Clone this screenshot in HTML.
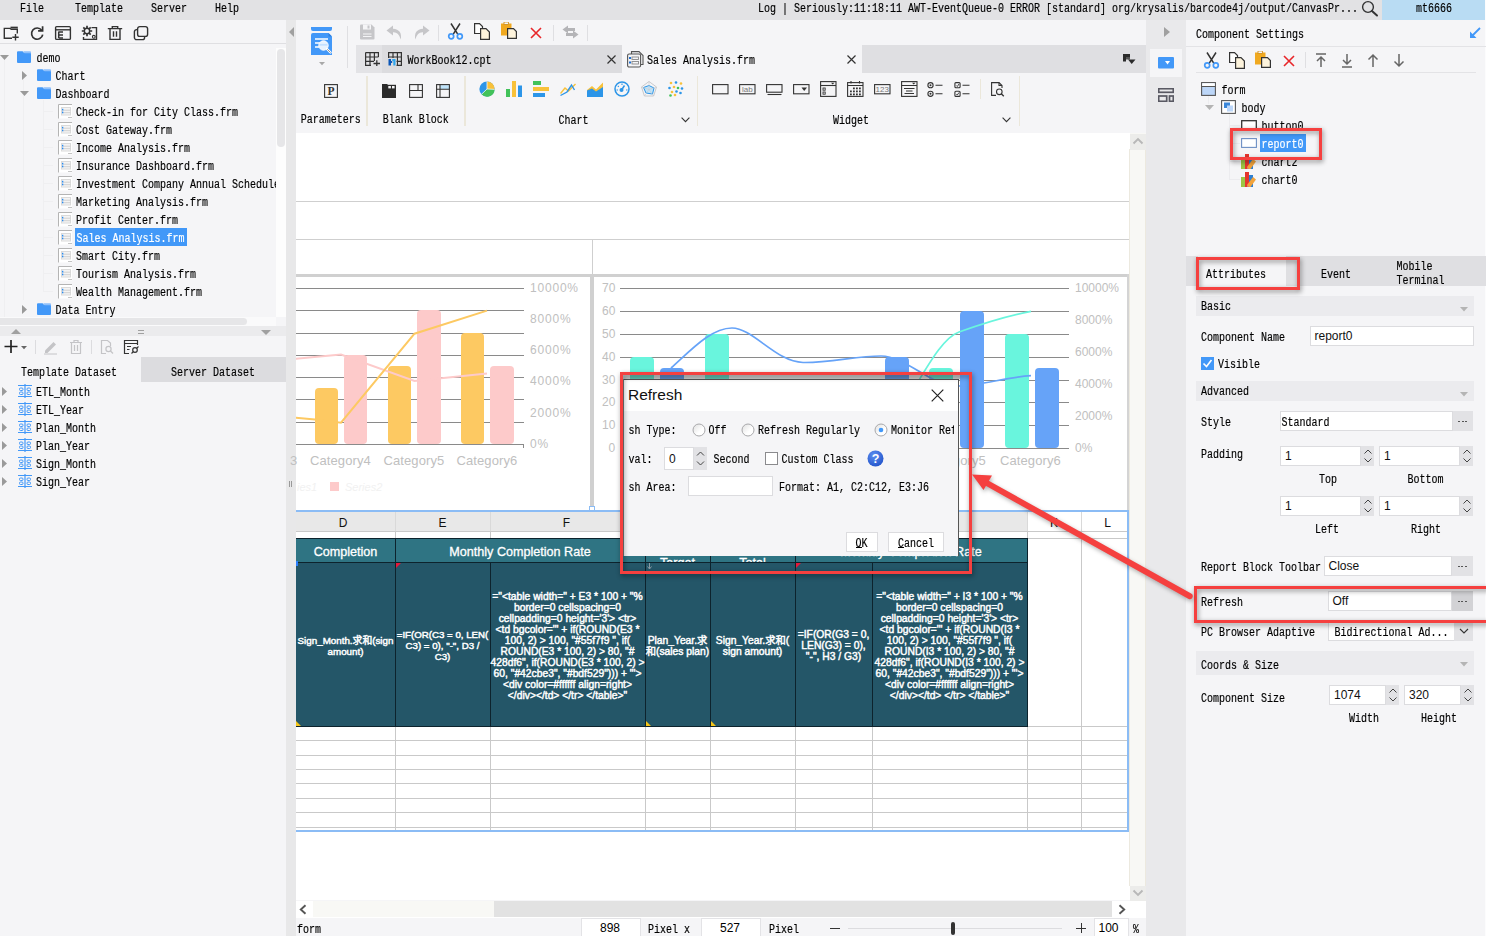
<!DOCTYPE html>
<html lang="en"><head><meta charset="utf-8"><title>Designer</title><style>
html,body{margin:0;padding:0}
body{width:1486px;height:936px;overflow:hidden;background:#f5f5f7;position:relative;font-family:"Liberation Sans",sans-serif}
#app{position:absolute;left:0;top:0;width:1486px;height:936px;overflow:hidden}
#app div,#app span,#app svg{position:absolute}
.t{font:10px/10px "Liberation Mono","Noto Sans CJK SC",monospace;transform:scaleY(1.2);transform-origin:0 0;white-space:pre;-webkit-text-stroke:0.15px currentColor}
.s{font-family:"Liberation Sans","Noto Sans CJK SC",sans-serif;white-space:pre}
.c{font-family:"Liberation Sans","Noto Sans CJK SC",sans-serif;color:#fff;-webkit-text-stroke:0.3px #fff;text-align:center;white-space:pre}
</style></head><body><div id="app">
<div style="left:0px;top:0px;width:1486px;height:20px;background:#e2e2e4;"></div>
<span class="t" style="left:20px;top:3.6px;">File</span>
<span class="t" style="left:75px;top:3.6px;">Template</span>
<span class="t" style="left:151px;top:3.6px;">Server</span>
<span class="t" style="left:215px;top:3.6px;">Help</span>
<span class="t" style="left:758px;top:3.6px;">Log | Seriously:11:18:11 AWT-EventQueue-0 ERROR [standard] org/krysalis/barcode4j/output/CanvasPr...</span>
<svg style="left:1360px;top:0px;" width="20" height="18" viewBox="0 0 20 18"><circle cx="8" cy="7" r="5.400" fill="none" stroke="#333" stroke-width="1.400"/><path d="M12 11l5 4.500" stroke="#333" stroke-width="2" stroke-linecap="round"/></svg>
<div style="left:1382px;top:0px;width:104px;height:20px;background:#b9dcf3;"></div>
<span class="t" style="left:1416px;top:3.6px;">mt6666</span>
<div style="left:0px;top:20px;width:286px;height:916px;background:#f5f5f7;"></div>
<div style="left:286px;top:20px;width:10px;height:916px;background:#e8e8e9;"></div>
<div style="left:0px;top:43px;width:286px;height:1px;background:#dfdfe2;"></div>
<svg style="left:3px;top:25px;" width="18" height="16" viewBox="0 0 18 16"><path d="M14.300 8.500V4.300H8.300L7 3.400H1.300V13.200H9" fill="none" stroke="#333" stroke-width="1.400"/><path d="M7.500 2.500H14.800" stroke="#333" stroke-width="1.700" fill="none"/><path d="M9.300 12.200h6.400M12.500 9v6.400" fill="none" stroke="#333" stroke-width="1.400"/></svg>
<svg style="left:29px;top:25px;" width="16" height="16" viewBox="0 0 16 16"><path d="M12.700 5.300A5.600 5.600 0 1 0 13.700 9.600" fill="none" stroke="#333" stroke-width="1.700"/><path d="M13.600 1.300V5.800H9.100" fill="none" stroke="#333" stroke-width="1.700"/></svg>
<svg style="left:54px;top:25px;" width="18" height="16" viewBox="0 0 18 16"><rect x="1.600" y="1.600" width="14.800" height="12.800" rx="1" fill="none" stroke="#333" stroke-width="1.400"/><path d="M1.600 4.800h14.800" fill="none" stroke="#333" stroke-width="1.400"/><path d="M4.700 6.500v6.600M4.700 7h4.300M4.700 10h4.300M4.700 13h4.300" stroke="#333" stroke-width="1.500" fill="none"/></svg>
<svg style="left:81px;top:25px;" width="18" height="16" viewBox="0 0 18 16"><circle cx="6" cy="6" r="2.700" fill="none" stroke="#333" stroke-width="1.500"/><path d="M9.10 6.00L11.20 6.00M8.19 8.19L9.68 9.68M6.00 9.10L6.00 11.20M3.81 8.19L2.32 9.68M2.90 6.00L0.80 6.00M3.81 3.81L2.32 2.32M6.00 2.90L6.00 0.80M8.19 3.81L9.68 2.32" stroke="#333" stroke-width="1.700" fill="none"/><path d="M10.500 2.600h5v11.800h-13v-2.400" fill="none" stroke="#333" stroke-width="1.400"/><circle cx="12.800" cy="11.800" r="1.400" fill="none" stroke="#333" stroke-width="1.100"/></svg>
<svg style="left:107px;top:25px;" width="16" height="16" viewBox="0 0 16 16"><path d="M0.800 3.600h14.400M5.300 3.600V1.600h5.400v2M3 3.600v10.800h10v-10.800M6.500 6.300v5.400M9.500 6.300v5.400" fill="none" stroke="#333" stroke-width="1.400"/></svg>
<svg style="left:133px;top:25px;" width="16" height="16" viewBox="0 0 16 16"><rect x="4.600" y="1.600" width="10" height="9.800" rx="2.200" fill="none" stroke="#333" stroke-width="1.400"/><path d="M4.600 4.600H3.600a2.200 2.200 0 0 0 -2.200 2.200v5.600a2.200 2.200 0 0 0 2.200 2.200h5.800a2.200 2.200 0 0 0 2.200 -2.200v-1" fill="none" stroke="#333" stroke-width="1.400"/></svg>
<div style="left:4px;top:60px;width:1px;height:260px;background:#efeff1;"></div>
<div style="left:23px;top:78px;width:1px;height:222px;background:#efeff1;"></div>
<div style="left:43px;top:100px;width:1px;height:192px;background:#efeff1;"></div>
<svg style="left:0px;top:55px;" width="9" height="5" viewBox="0 0 9 5"><path d="M0 0H9L4.5 5Z" fill="#9a9a9a"/></svg>
<svg style="left:17px;top:51px;" width="14" height="12" viewBox="0 0 14 12"><path d="M0 1.2Q0 0.2 1 0.2H5.6L7 1.8H13Q14 1.8 14 2.8V11Q14 12 13 12H1Q0 12 0 11Z" fill="#4298f8"/><path d="M6.2 0.2H13Q14 0.2 14 1.2V2.2H7.6Z" fill="#8fc0fb"/></svg>
<span class="t" style="left:36.5px;top:53.6px;">demo</span>
<svg style="left:22px;top:71px;" width="5" height="9" viewBox="0 0 5 9"><path d="M0 0V9L5 4.5Z" fill="#9a9a9a"/></svg>
<svg style="left:37px;top:69px;" width="14" height="12" viewBox="0 0 14 12"><path d="M0 1.2Q0 0.2 1 0.2H5.6L7 1.8H13Q14 1.8 14 2.8V11Q14 12 13 12H1Q0 12 0 11Z" fill="#4298f8"/><path d="M6.2 0.2H13Q14 0.2 14 1.2V2.2H7.6Z" fill="#8fc0fb"/></svg>
<span class="t" style="left:55.5px;top:71.6px;">Chart</span>
<svg style="left:20px;top:91px;" width="9" height="5" viewBox="0 0 9 5"><path d="M0 0H9L4.5 5Z" fill="#9a9a9a"/></svg>
<svg style="left:37px;top:87px;" width="14" height="12" viewBox="0 0 14 12"><path d="M0 1.2Q0 0.2 1 0.2H5.6L7 1.8H13Q14 1.8 14 2.8V11Q14 12 13 12H1Q0 12 0 11Z" fill="#4298f8"/><path d="M6.2 0.2H13Q14 0.2 14 1.2V2.2H7.6Z" fill="#8fc0fb"/></svg>
<span class="t" style="left:55.5px;top:89.6px;">Dashboard</span>
<div style="left:44px;top:111px;width:9px;height:1px;background:#efeff1;"></div>
<svg style="left:58px;top:104px;" width="14" height="15" viewBox="0 0 14 15"><rect x="0" y="0" width="14" height="14.500" fill="#fff"/><path d="M0.500 14.500V0.500H14" fill="none" stroke="#b4b4b4"/><rect x="3.500" y="3.500" width="9" height="7.500" fill="#f4f4f4" stroke="#dadada"/><path d="M5 6.200H12.500M5 8.700H12.500" stroke="#d0d0d0"/><rect x="4" y="4.800" width="1.300" height="1.700" fill="#2a8cf0"/><rect x="4" y="7.600" width="1.300" height="1.700" fill="#2a8cf0"/><rect x="10" y="13" width="4" height="1" fill="#c4c4c4"/></svg>
<span class="t" style="left:76px;top:107.6px;">Check-in for City Class.frm</span>
<div style="left:44px;top:129px;width:9px;height:1px;background:#efeff1;"></div>
<svg style="left:58px;top:122px;" width="14" height="15" viewBox="0 0 14 15"><rect x="0" y="0" width="14" height="14.500" fill="#fff"/><path d="M0.500 14.500V0.500H14" fill="none" stroke="#b4b4b4"/><rect x="3.500" y="3.500" width="9" height="7.500" fill="#f4f4f4" stroke="#dadada"/><path d="M5 6.200H12.500M5 8.700H12.500" stroke="#d0d0d0"/><rect x="4" y="4.800" width="1.300" height="1.700" fill="#2a8cf0"/><rect x="4" y="7.600" width="1.300" height="1.700" fill="#2a8cf0"/><rect x="10" y="13" width="4" height="1" fill="#c4c4c4"/></svg>
<span class="t" style="left:76px;top:125.6px;">Cost Gateway.frm</span>
<div style="left:44px;top:147px;width:9px;height:1px;background:#efeff1;"></div>
<svg style="left:58px;top:140px;" width="14" height="15" viewBox="0 0 14 15"><rect x="0" y="0" width="14" height="14.500" fill="#fff"/><path d="M0.500 14.500V0.500H14" fill="none" stroke="#b4b4b4"/><rect x="3.500" y="3.500" width="9" height="7.500" fill="#f4f4f4" stroke="#dadada"/><path d="M5 6.200H12.500M5 8.700H12.500" stroke="#d0d0d0"/><rect x="4" y="4.800" width="1.300" height="1.700" fill="#2a8cf0"/><rect x="4" y="7.600" width="1.300" height="1.700" fill="#2a8cf0"/><rect x="10" y="13" width="4" height="1" fill="#c4c4c4"/></svg>
<span class="t" style="left:76px;top:143.6px;">Income Analysis.frm</span>
<div style="left:44px;top:165px;width:9px;height:1px;background:#efeff1;"></div>
<svg style="left:58px;top:158px;" width="14" height="15" viewBox="0 0 14 15"><rect x="0" y="0" width="14" height="14.500" fill="#fff"/><path d="M0.500 14.500V0.500H14" fill="none" stroke="#b4b4b4"/><rect x="3.500" y="3.500" width="9" height="7.500" fill="#f4f4f4" stroke="#dadada"/><path d="M5 6.200H12.500M5 8.700H12.500" stroke="#d0d0d0"/><rect x="4" y="4.800" width="1.300" height="1.700" fill="#2a8cf0"/><rect x="4" y="7.600" width="1.300" height="1.700" fill="#2a8cf0"/><rect x="10" y="13" width="4" height="1" fill="#c4c4c4"/></svg>
<span class="t" style="left:76px;top:161.6px;">Insurance Dashboard.frm</span>
<div style="left:44px;top:183px;width:9px;height:1px;background:#efeff1;"></div>
<svg style="left:58px;top:176px;" width="14" height="15" viewBox="0 0 14 15"><rect x="0" y="0" width="14" height="14.500" fill="#fff"/><path d="M0.500 14.500V0.500H14" fill="none" stroke="#b4b4b4"/><rect x="3.500" y="3.500" width="9" height="7.500" fill="#f4f4f4" stroke="#dadada"/><path d="M5 6.200H12.500M5 8.700H12.500" stroke="#d0d0d0"/><rect x="4" y="4.800" width="1.300" height="1.700" fill="#2a8cf0"/><rect x="4" y="7.600" width="1.300" height="1.700" fill="#2a8cf0"/><rect x="10" y="13" width="4" height="1" fill="#c4c4c4"/></svg>
<div style="left:76px;top:174px;width:200px;height:18px;overflow:hidden"><span class="t" style="left:0;top:5.600px">Investment Company Annual Schedule.frm</span></div>
<div style="left:44px;top:201px;width:9px;height:1px;background:#efeff1;"></div>
<svg style="left:58px;top:194px;" width="14" height="15" viewBox="0 0 14 15"><rect x="0" y="0" width="14" height="14.500" fill="#fff"/><path d="M0.500 14.500V0.500H14" fill="none" stroke="#b4b4b4"/><rect x="3.500" y="3.500" width="9" height="7.500" fill="#f4f4f4" stroke="#dadada"/><path d="M5 6.200H12.500M5 8.700H12.500" stroke="#d0d0d0"/><rect x="4" y="4.800" width="1.300" height="1.700" fill="#2a8cf0"/><rect x="4" y="7.600" width="1.300" height="1.700" fill="#2a8cf0"/><rect x="10" y="13" width="4" height="1" fill="#c4c4c4"/></svg>
<span class="t" style="left:76px;top:197.6px;">Marketing Analysis.frm</span>
<div style="left:44px;top:219px;width:9px;height:1px;background:#efeff1;"></div>
<svg style="left:58px;top:212px;" width="14" height="15" viewBox="0 0 14 15"><rect x="0" y="0" width="14" height="14.500" fill="#fff"/><path d="M0.500 14.500V0.500H14" fill="none" stroke="#b4b4b4"/><rect x="3.500" y="3.500" width="9" height="7.500" fill="#f4f4f4" stroke="#dadada"/><path d="M5 6.200H12.500M5 8.700H12.500" stroke="#d0d0d0"/><rect x="4" y="4.800" width="1.300" height="1.700" fill="#2a8cf0"/><rect x="4" y="7.600" width="1.300" height="1.700" fill="#2a8cf0"/><rect x="10" y="13" width="4" height="1" fill="#c4c4c4"/></svg>
<span class="t" style="left:76px;top:215.6px;">Profit Center.frm</span>
<div style="left:44px;top:237px;width:9px;height:1px;background:#efeff1;"></div>
<svg style="left:58px;top:230px;" width="14" height="15" viewBox="0 0 14 15"><rect x="0" y="0" width="14" height="14.500" fill="#fff"/><path d="M0.500 14.500V0.500H14" fill="none" stroke="#b4b4b4"/><rect x="3.500" y="3.500" width="9" height="7.500" fill="#f4f4f4" stroke="#dadada"/><path d="M5 6.200H12.500M5 8.700H12.500" stroke="#d0d0d0"/><rect x="4" y="4.800" width="1.300" height="1.700" fill="#2a8cf0"/><rect x="4" y="7.600" width="1.300" height="1.700" fill="#2a8cf0"/><rect x="10" y="13" width="4" height="1" fill="#c4c4c4"/></svg>
<div style="left:75px;top:228px;width:112px;height:18px;background:#4198f8;"></div>
<span class="t" style="left:76.5px;top:233.6px;color:#fff;">Sales Analysis.frm</span>
<div style="left:44px;top:255px;width:9px;height:1px;background:#efeff1;"></div>
<svg style="left:58px;top:248px;" width="14" height="15" viewBox="0 0 14 15"><rect x="0" y="0" width="14" height="14.500" fill="#fff"/><path d="M0.500 14.500V0.500H14" fill="none" stroke="#b4b4b4"/><rect x="3.500" y="3.500" width="9" height="7.500" fill="#f4f4f4" stroke="#dadada"/><path d="M5 6.200H12.500M5 8.700H12.500" stroke="#d0d0d0"/><rect x="4" y="4.800" width="1.300" height="1.700" fill="#2a8cf0"/><rect x="4" y="7.600" width="1.300" height="1.700" fill="#2a8cf0"/><rect x="10" y="13" width="4" height="1" fill="#c4c4c4"/></svg>
<span class="t" style="left:76px;top:251.6px;">Smart City.frm</span>
<div style="left:44px;top:273px;width:9px;height:1px;background:#efeff1;"></div>
<svg style="left:58px;top:266px;" width="14" height="15" viewBox="0 0 14 15"><rect x="0" y="0" width="14" height="14.500" fill="#fff"/><path d="M0.500 14.500V0.500H14" fill="none" stroke="#b4b4b4"/><rect x="3.500" y="3.500" width="9" height="7.500" fill="#f4f4f4" stroke="#dadada"/><path d="M5 6.200H12.500M5 8.700H12.500" stroke="#d0d0d0"/><rect x="4" y="4.800" width="1.300" height="1.700" fill="#2a8cf0"/><rect x="4" y="7.600" width="1.300" height="1.700" fill="#2a8cf0"/><rect x="10" y="13" width="4" height="1" fill="#c4c4c4"/></svg>
<span class="t" style="left:76px;top:269.6px;">Tourism Analysis.frm</span>
<div style="left:44px;top:291px;width:9px;height:1px;background:#efeff1;"></div>
<svg style="left:58px;top:284px;" width="14" height="15" viewBox="0 0 14 15"><rect x="0" y="0" width="14" height="14.500" fill="#fff"/><path d="M0.500 14.500V0.500H14" fill="none" stroke="#b4b4b4"/><rect x="3.500" y="3.500" width="9" height="7.500" fill="#f4f4f4" stroke="#dadada"/><path d="M5 6.200H12.500M5 8.700H12.500" stroke="#d0d0d0"/><rect x="4" y="4.800" width="1.300" height="1.700" fill="#2a8cf0"/><rect x="4" y="7.600" width="1.300" height="1.700" fill="#2a8cf0"/><rect x="10" y="13" width="4" height="1" fill="#c4c4c4"/></svg>
<span class="t" style="left:76px;top:287.6px;">Wealth Management.frm</span>
<svg style="left:22px;top:305px;" width="5" height="9" viewBox="0 0 5 9"><path d="M0 0V9L5 4.5Z" fill="#9a9a9a"/></svg>
<svg style="left:37px;top:303px;" width="14" height="12" viewBox="0 0 14 12"><path d="M0 1.2Q0 0.2 1 0.2H5.6L7 1.8H13Q14 1.8 14 2.8V11Q14 12 13 12H1Q0 12 0 11Z" fill="#4298f8"/><path d="M6.2 0.2H13Q14 0.2 14 1.2V2.2H7.6Z" fill="#8fc0fb"/></svg>
<span class="t" style="left:55.5px;top:305.6px;">Data Entry</span>
<div style="left:276px;top:44px;width:10px;height:282px;background:#f5f5f7;"></div>
<div style="left:276px;top:48px;width:10px;height:269px;background:#fdfdfd;"></div>
<div style="left:277px;top:48.5px;width:8px;height:98px;background:#e6e6e8;border-radius:4px"></div>
<div style="left:0px;top:317px;width:276px;height:9px;background:#fafafb;"></div>
<div style="left:0px;top:317.5px;width:247px;height:7.5px;background:#e6e6e8;border-radius:0 4px 4px 0"></div>
<div style="left:0px;top:326px;width:286px;height:10px;background:#ebebed;"></div>
<svg style="left:11px;top:329px;" width="10" height="5" viewBox="0 0 10 5"><path d="M0 5H10L5 0Z" fill="#a0a0a0"/></svg>
<svg style="left:261px;top:329.5px;" width="10" height="5" viewBox="0 0 10 5"><path d="M0 0H10L5 5Z" fill="#a0a0a0"/></svg>
<div style="left:138px;top:330px;width:6px;height:1px;background:#a0a0a0;"></div>
<div style="left:138px;top:333px;width:6px;height:1px;background:#a0a0a0;"></div>
<div style="left:0px;top:336px;width:286px;height:22px;background:#f5f5f7;"></div>
<svg style="left:3px;top:339px;" width="24" height="16" viewBox="0 0 24 16"><path d="M1.5 7.5h13M8 1v13" stroke="#222" stroke-width="1.7" fill="none"/><path d="M18 7h6l-3 3.2z" fill="#666"/></svg>
<div style="left:35px;top:340px;width:1px;height:14px;background:#dcdcdf;"></div>
<div style="left:91px;top:340px;width:1px;height:14px;background:#dcdcdf;"></div>
<svg style="left:43px;top:339px;" width="16" height="16" viewBox="0 0 16 16"><path d="M2 11.5L10.5 3l2.5 2.5L4.5 14H2Z" fill="#c4c4c7"/><path d="M1 15h13" stroke="#c4c4c7"/></svg>
<svg style="left:68px;top:339px;" width="16" height="16" viewBox="0 0 16 16"><path d="M2 3.5h12M6 3.5V1.5h4v2M3.5 3.5v11h9v-11M6.5 6v6M9.5 6v6" fill="none" stroke="#c4c4c7" stroke-width="1.2"/></svg>
<svg style="left:99px;top:339px;" width="16" height="16" viewBox="0 0 16 16"><path d="M11.5 7V4L8.5 1.5H2.5V14.500H7" fill="none" stroke="#c4c4c7" stroke-width="1.2"/><circle cx="9.500" cy="10" r="2.6" fill="none" stroke="#c4c4c7" stroke-width="1.2"/><path d="M11.500 12L14 14.500" stroke="#c4c4c7" stroke-width="1.3"/></svg>
<svg style="left:123px;top:339px;" width="18" height="16" viewBox="0 0 18 16"><path d="M14.500 6V1.500H1.500V14.500H6" fill="none" stroke="#333" stroke-width="1.2"/><path d="M1.500 4.500H14.500M4 7.500H8M4 10.500H6.500" fill="none" stroke="#333" stroke-width="1.2"/><circle cx="12" cy="11" r="2.300" fill="none" stroke="#333" stroke-width="1.2"/><path d="M8.500 14.500L10.300 12.700M13.600 9.400L15.500 7.500" fill="none" stroke="#333" stroke-width="1.2"/></svg>
<div style="left:0px;top:357px;width:141px;height:25px;background:#f5f5f7;"></div>
<div style="left:141px;top:357px;width:145px;height:25px;background:#dcdcdf;"></div>
<span class="t" style="left:21px;top:367.6px;">Template Dataset</span>
<span class="t" style="left:171px;top:367.6px;">Server Dataset</span>
<svg style="left:2px;top:386.5px;" width="5" height="9" viewBox="0 0 5 9"><path d="M0 0V9L5 4.5Z" fill="#9a9a9a"/></svg>
<svg style="left:18px;top:384px;" width="14" height="14" viewBox="0 0 14 14"><path d="M7 0V14" stroke="#4298f8" stroke-width="1.2"/><path d="M0 1.500H14M0 12.500H14" stroke="#4298f8" stroke-width="1"/><g fill="none" stroke="#4298f8" stroke-width="1"><rect x="1.500" y="4" width="3.500" height="2.500" rx="1"/><rect x="1.500" y="8" width="3.500" height="2.500" rx="1"/><rect x="9" y="4" width="3.500" height="2.500" rx="1"/><rect x="9" y="8" width="3.500" height="2.500" rx="1"/></g></svg>
<span class="t" style="left:36px;top:387.6px;">ETL_Month</span>
<svg style="left:2px;top:404.5px;" width="5" height="9" viewBox="0 0 5 9"><path d="M0 0V9L5 4.5Z" fill="#9a9a9a"/></svg>
<svg style="left:18px;top:402px;" width="14" height="14" viewBox="0 0 14 14"><path d="M7 0V14" stroke="#4298f8" stroke-width="1.2"/><path d="M0 1.500H14M0 12.500H14" stroke="#4298f8" stroke-width="1"/><g fill="none" stroke="#4298f8" stroke-width="1"><rect x="1.500" y="4" width="3.500" height="2.500" rx="1"/><rect x="1.500" y="8" width="3.500" height="2.500" rx="1"/><rect x="9" y="4" width="3.500" height="2.500" rx="1"/><rect x="9" y="8" width="3.500" height="2.500" rx="1"/></g></svg>
<span class="t" style="left:36px;top:405.6px;">ETL_Year</span>
<svg style="left:2px;top:422.5px;" width="5" height="9" viewBox="0 0 5 9"><path d="M0 0V9L5 4.5Z" fill="#9a9a9a"/></svg>
<svg style="left:18px;top:420px;" width="14" height="14" viewBox="0 0 14 14"><path d="M7 0V14" stroke="#4298f8" stroke-width="1.2"/><path d="M0 1.500H14M0 12.500H14" stroke="#4298f8" stroke-width="1"/><g fill="none" stroke="#4298f8" stroke-width="1"><rect x="1.500" y="4" width="3.500" height="2.500" rx="1"/><rect x="1.500" y="8" width="3.500" height="2.500" rx="1"/><rect x="9" y="4" width="3.500" height="2.500" rx="1"/><rect x="9" y="8" width="3.500" height="2.500" rx="1"/></g></svg>
<span class="t" style="left:36px;top:423.6px;">Plan_Month</span>
<svg style="left:2px;top:440.5px;" width="5" height="9" viewBox="0 0 5 9"><path d="M0 0V9L5 4.5Z" fill="#9a9a9a"/></svg>
<svg style="left:18px;top:438px;" width="14" height="14" viewBox="0 0 14 14"><path d="M7 0V14" stroke="#4298f8" stroke-width="1.2"/><path d="M0 1.500H14M0 12.500H14" stroke="#4298f8" stroke-width="1"/><g fill="none" stroke="#4298f8" stroke-width="1"><rect x="1.500" y="4" width="3.500" height="2.500" rx="1"/><rect x="1.500" y="8" width="3.500" height="2.500" rx="1"/><rect x="9" y="4" width="3.500" height="2.500" rx="1"/><rect x="9" y="8" width="3.500" height="2.500" rx="1"/></g></svg>
<span class="t" style="left:36px;top:441.6px;">Plan_Year</span>
<svg style="left:2px;top:458.5px;" width="5" height="9" viewBox="0 0 5 9"><path d="M0 0V9L5 4.5Z" fill="#9a9a9a"/></svg>
<svg style="left:18px;top:456px;" width="14" height="14" viewBox="0 0 14 14"><path d="M7 0V14" stroke="#4298f8" stroke-width="1.2"/><path d="M0 1.500H14M0 12.500H14" stroke="#4298f8" stroke-width="1"/><g fill="none" stroke="#4298f8" stroke-width="1"><rect x="1.500" y="4" width="3.500" height="2.500" rx="1"/><rect x="1.500" y="8" width="3.500" height="2.500" rx="1"/><rect x="9" y="4" width="3.500" height="2.500" rx="1"/><rect x="9" y="8" width="3.500" height="2.500" rx="1"/></g></svg>
<span class="t" style="left:36px;top:459.6px;">Sign_Month</span>
<svg style="left:2px;top:476.5px;" width="5" height="9" viewBox="0 0 5 9"><path d="M0 0V9L5 4.5Z" fill="#9a9a9a"/></svg>
<svg style="left:18px;top:474px;" width="14" height="14" viewBox="0 0 14 14"><path d="M7 0V14" stroke="#4298f8" stroke-width="1.2"/><path d="M0 1.500H14M0 12.500H14" stroke="#4298f8" stroke-width="1"/><g fill="none" stroke="#4298f8" stroke-width="1"><rect x="1.500" y="4" width="3.500" height="2.500" rx="1"/><rect x="1.500" y="8" width="3.500" height="2.500" rx="1"/><rect x="9" y="4" width="3.500" height="2.500" rx="1"/><rect x="9" y="8" width="3.500" height="2.500" rx="1"/></g></svg>
<span class="t" style="left:36px;top:477.6px;">Sign_Year</span>
<svg style="left:289px;top:27px;" width="5" height="10" viewBox="0 0 5 10"><path d="M5 0V10L0 5Z" fill="#a0a0a0"/></svg>
<svg style="left:311px;top:27px;" width="22" height="29" viewBox="0 0 22 29"><path d="M0 0H21V2Q21 4 19 4H2Q0 4 0 2Z" fill="#4298f8"/><path d="M0 8Q0 6 2 6H17.500L21 9.500V28H0Z" fill="#4298f8"/><path d="M17.500 6V9.500H21Z" fill="#2a7fe0"/><path d="M4 12H17M4 16H9M4 20H8" stroke="#fff" stroke-width="1.700"/><circle cx="12.500" cy="18.500" r="4.700" fill="#e8f3ff" stroke="#fff" stroke-width="1"/><path d="M8.500 17.800h8" stroke="#c4e0ff" stroke-width="1.800"/><path d="M16 22L19.500 25.500" stroke="#fff" stroke-width="2.400" stroke-linecap="round"/><path d="M16.500 22.500L19.300 25.300" stroke="#888" stroke-width="0.900" stroke-linecap="round"/></svg>
<svg style="left:319px;top:62px;" width="6" height="4" viewBox="0 0 6 4"><path d="M0 0H6L3 3.200Z" fill="#a8a8a8"/></svg>
<div style="left:347px;top:26px;width:1px;height:42px;background:#dfdfe2;"></div>
<svg style="left:359px;top:24px;" width="16" height="16" viewBox="0 0 16 16"><path d="M1 1.500Q1 0.500 2 0.500H12.500L15.500 3.500V14.500Q15.500 15.500 14.500 15.500H2Q1 15.500 1 14.500Z" fill="#c6c6c9"/><rect x="4" y="0.500" width="8" height="5" fill="#f5f5f7"/><rect x="8.500" y="1.500" width="2" height="3" fill="#c6c6c9"/><path d="M4 10H12.500M4 12.500H12.500" stroke="#f5f5f7" stroke-width="1.200"/></svg>
<svg style="left:386px;top:25px;" width="17" height="15" viewBox="0 0 17 15"><path d="M7 0.500L0.500 5.500L7 10.500V7.300Q12.500 6.800 14.800 14.500Q16.500 4.500 7 3.700Z" fill="#c6c6c9"/></svg>
<svg style="left:413px;top:25px;" width="17" height="15" viewBox="0 0 17 15"><path d="M10 0.500L16.500 5.500L10 10.500V7.300Q4.500 6.800 2.200 14.500Q0.500 4.500 10 3.700Z" fill="#c6c6c9"/></svg>
<div style="left:438px;top:25px;width:1px;height:16px;background:#dfdfe2;"></div>
<svg style="left:447px;top:23px;" width="17" height="17" viewBox="0 0 17 17"><path d="M4 0.500L11.200 11.800M13 0.500L5.800 11.800" stroke="#333" stroke-width="1.500" fill="none"/><circle cx="4.200" cy="13.300" r="2.500" fill="none" stroke="#4298f8" stroke-width="1.700"/><circle cx="12.800" cy="13.300" r="2.500" fill="none" stroke="#4298f8" stroke-width="1.700"/></svg>
<svg style="left:474px;top:23px;" width="17" height="17" viewBox="0 0 17 17"><path d="M0.600 0.600H5.500L8.500 3.600V10.500H0.600Z" fill="#fff" stroke="#333" stroke-width="1.200"/><path d="M6.600 5.600H12L15.400 9V16.400H6.600Z" fill="#fdf3dc" stroke="#333" stroke-width="1.200"/></svg>
<svg style="left:501px;top:22px;" width="17" height="17" viewBox="0 0 17 17"><path d="M0 1.500H10.500V13.500H0Z" fill="#f0a920"/><rect x="3" y="0" width="4.500" height="2.500" fill="#f5f5f7" stroke="#d08a10" stroke-width="0.800"/><path d="M6.600 6.600H12.500L15.400 9.500V16.400H6.600Z" fill="#fdf3dc" stroke="#333" stroke-width="1.200"/></svg>
<svg style="left:530px;top:27px;" width="12" height="12" viewBox="0 0 12 12"><path d="M1 1L11 11M11 1L1 11" stroke="#e8262a" stroke-width="1.600" fill="none"/></svg>
<div style="left:553px;top:25px;width:1px;height:16px;background:#dfdfe2;"></div>
<svg style="left:562px;top:25px;" width="17" height="14" viewBox="0 0 17 14"><path d="M6 0.500L0.500 4.500L6 8.500V6H13V3H6Z" fill="#b4b4b7"/><path d="M11 5.500L16.500 9.500L11 13.500V11H4V8H11Z" fill="#b4b4b7"/></svg>
<div style="left:587px;top:25px;width:1px;height:16px;background:#dfdfe2;"></div>
<div style="left:356px;top:45px;width:790px;height:28px;background:#dfdfe2;"></div>
<div style="left:356px;top:45px;width:26px;height:28px;background:#e3e3e6;"></div>
<div style="left:382px;top:45px;width:240px;height:28px;background:#dcdcdf;"></div>
<div style="left:622px;top:45px;width:240px;height:28px;background:#f5f5f7;"></div>
<svg style="left:364.5px;top:52px;" width="16" height="14" viewBox="0 0 16 14"><path d="M0.600 0.600H13.400V5M0.600 0.600V13.400H6M0.600 5H13.400M0.600 9.400H9M5 0.600V13.400M9.400 0.600V9" fill="none" stroke="#333" stroke-width="1.200"/><path d="M8.500 11.500H15M11.800 8.200V14.800" stroke="#333" stroke-width="1.300"/></svg>
<svg style="left:388px;top:52px;" width="14" height="14" viewBox="0 0 14 14"><path d="M0.600 0.600H13.400V13.400H0.600ZM0.600 5H13.400M0.600 9.400H13.400M5 0.600V13.400M9.400 0.600V13.400" fill="none" stroke="#333" stroke-width="1.200"/><rect x="0" y="6" width="8.500" height="8" fill="#dcdcdf"/><path d="M0.500 7H3V9H4.200V11H3V13.500H0.500Z" fill="#0a56b8"/><path d="M4.200 7H7.500V13.500H5.300V9H4.200Z" fill="#2ea6ee"/></svg>
<span class="t" style="left:407.5px;top:55.6px;">WorkBook12.cpt</span>
<svg style="left:607px;top:55px;" width="9" height="9" viewBox="0 0 9 9"><path d="M0.500 0.500L8.500 8.500M8.500 0.500L0.500 8.500" stroke="#333" stroke-width="1.200"/></svg>
<svg style="left:627px;top:51px;" width="17" height="17" viewBox="0 0 17 17"><path d="M4.500 3V0.600H12L16 4.500V13.500H14" fill="#f5f5f7" stroke="#555" stroke-width="1.100"/><rect x="0.600" y="3" width="13" height="13" rx="1.500" fill="#f5f5f7" stroke="#555" stroke-width="1.100"/><rect x="5" y="6" width="6.500" height="2.500" fill="none" stroke="#888" stroke-width="0.900"/><rect x="5" y="10.500" width="6.500" height="2.500" fill="none" stroke="#888" stroke-width="0.900"/><rect x="2" y="6" width="2" height="2" fill="#1f6fd0"/><rect x="2" y="10.500" width="2" height="2" fill="#1f6fd0"/></svg>
<span class="t" style="left:647px;top:55.6px;">Sales Analysis.frm</span>
<svg style="left:847px;top:55px;" width="9" height="9" viewBox="0 0 9 9"><path d="M0.500 0.500L8.500 8.500M8.500 0.500L0.500 8.500" stroke="#333" stroke-width="1.200"/></svg>
<svg style="left:1122.5px;top:53.5px;" width="14" height="12" viewBox="0 0 14 12"><path d="M0 0H7V3H3V7.500H0Z" fill="#2b2b2b"/><path d="M3 3H7V5.500H3Z" fill="#555"/><path d="M5 5.500H12.500L8.700 10Z" fill="#2b2b2b"/></svg>
<svg style="left:324px;top:84px;" width="14" height="14" viewBox="0 0 14 14"><rect x="0.600" y="0.600" width="12.800" height="12.800" fill="none" stroke="#333" stroke-width="1.100"/><text x="7" y="11" text-anchor="middle" font-family="Liberation Serif,serif" font-weight="bold" font-size="11.500" fill="#333">P</text></svg>
<span class="t" style="left:300.7px;top:114.6px;">Parameters</span>
<div style="left:366px;top:76px;width:1.5px;height:50px;background:#ebe7da;"></div>
<svg style="left:382px;top:84px;" width="14" height="14" viewBox="0 0 14 14"><rect x="0" y="0" width="14" height="14" fill="#2b2b2b"/><rect x="5.500" y="0" width="8.500" height="0.800" fill="#f5f5f7"/><rect x="6.300" y="2" width="2.600" height="2.400" fill="#f5f5f7"/><rect x="10" y="2" width="2.600" height="2.400" fill="#f5f5f7"/></svg>
<svg style="left:409px;top:84px;" width="14" height="14" viewBox="0 0 14 14"><rect x="0.600" y="0.600" width="12.800" height="12.800" fill="none" stroke="#333" stroke-width="1.100"/><path d="M0.600 6.500H13.400M9 0.600V6.500" fill="none" stroke="#333" stroke-width="1.100"/></svg>
<svg style="left:436px;top:84px;" width="14" height="14" viewBox="0 0 14 14"><rect x="4" y="1.200" width="9.400" height="3.800" fill="#bfe4fb"/><rect x="0.600" y="0.600" width="12.800" height="12.800" fill="none" stroke="#333" stroke-width="1.100"/><path d="M0.600 5.200H13.400M4 0.600V13.400" fill="none" stroke="#333" stroke-width="1.100"/></svg>
<span class="t" style="left:382.7px;top:114.6px;">Blank Block</span>
<div style="left:464px;top:76px;width:1.5px;height:50px;background:#ebe7da;"></div>
<svg style="left:479px;top:81px;" width="16" height="16" viewBox="0 0 16 16"><circle cx="8" cy="8" r="7.600" fill="#2c95e8"/><path d="M8 8V0.400A7.600 7.600 0 0 1 15.600 8.400Z" fill="#f8c13a"/><path d="M8 8L15.600 8.400A7.600 7.600 0 0 1 2.500 13.300Z" fill="#42c25a"/><path d="M8 8V0.400M8 8L15.600 8.400M8 8L2.500 13.300" stroke="#f5f5f7" stroke-width="0.800"/></svg>
<svg style="left:506px;top:81px;" width="16" height="16" viewBox="0 0 16 16"><rect x="0" y="8" width="4" height="8" fill="#42c25a"/><rect x="6" y="0" width="4" height="16" fill="#f8c13a"/><rect x="12" y="4.500" width="4" height="11.500" fill="#2c95e8"/></svg>
<svg style="left:533px;top:81px;" width="16" height="16" viewBox="0 0 16 16"><rect x="0" y="0" width="8" height="4" fill="#42c25a"/><rect x="0" y="6" width="16" height="4" fill="#f8c13a"/><rect x="0" y="12" width="12" height="4" fill="#2c95e8"/></svg>
<svg style="left:560px;top:81px;" width="17" height="16" viewBox="0 0 17 16"><path d="M0.500 12.500L5 7L8.500 10L15.500 3" fill="none" stroke="#f8c13a" stroke-width="1.400"/><path d="M0.500 14.500L7 11L11.500 4L14.500 9" fill="none" stroke="#2c95e8" stroke-width="1.400"/></svg>
<svg style="left:587px;top:81px;" width="16" height="16" viewBox="0 0 16 16"><path d="M0 16V9L5 5L9 8.500L16 1.500V16Z" fill="#f8c13a"/><path d="M0 16V9.500L5 7.500L9 10.500L16 6V16Z" fill="#2c95e8"/></svg>
<svg style="left:614px;top:81px;" width="16" height="16" viewBox="0 0 16 16"><circle cx="8" cy="8" r="7" fill="none" stroke="#2c95e8" stroke-width="1.500"/><circle cx="7.500" cy="9" r="2" fill="#2c95e8"/><path d="M7.500 9L10.500 4.500" stroke="#2c95e8" stroke-width="1.500"/><path d="M2.500 9H4M12 9H13.500M8 2.500V4M3.800 4.800L4.800 5.800" stroke="#2c95e8" stroke-width="1.100"/></svg>
<svg style="left:641px;top:81px;" width="16" height="16" viewBox="0 0 16 16"><path d="M8 0.500L15.500 6L12.600 15H3.400L0.500 6Z" fill="none" stroke="#c9c9cc" stroke-width="1"/><path d="M8 4.500L13 7L11.500 13L5 12L2.500 6.500Z" fill="#bfe4fb" stroke="#2c95e8" stroke-width="1"/><path d="M8 8.500L8 0.500M8 8.500L15.500 6M8 8.500L12.600 15M8 8.500L3.400 15M8 8.500L0.500 6" stroke="#c9c9cc" stroke-width="0.600"/></svg>
<svg style="left:668px;top:81px;" width="16" height="16" viewBox="0 0 16 16"><circle cx="3" cy="2" r="1.300" fill="#f8c13a"/><circle cx="8" cy="1.5" r="1.300" fill="#2c95e8"/><circle cx="13" cy="2.5" r="1.300" fill="#f8c13a"/><circle cx="1.5" cy="7" r="1.300" fill="#2c95e8"/><circle cx="6" cy="6" r="1.300" fill="#f8c13a"/><circle cx="10" cy="7" r="1.300" fill="#42c25a"/><circle cx="14" cy="7.5" r="1.300" fill="#2c95e8"/><circle cx="4" cy="11" r="1.300" fill="#f8c13a"/><circle cx="8.5" cy="10.5" r="1.300" fill="#2c95e8"/><circle cx="12.5" cy="12" r="1.300" fill="#2c95e8"/><circle cx="2.5" cy="14.5" r="1.300" fill="#42c25a"/><circle cx="7" cy="14" r="1.300" fill="#f8c13a"/></svg>
<span class="t" style="left:558.5px;top:115.6px;">Chart</span>
<svg style="left:681px;top:117px;" width="9" height="6" viewBox="0 0 9 6"><path d="M0.600 0.600L4.500 4.600L8.400 0.600" fill="none" stroke="#333" stroke-width="1.100"/></svg>
<div style="left:696.5px;top:76px;width:1.5px;height:50px;background:#ebe7da;"></div>
<svg style="left:712px;top:84px;" width="17" height="11" viewBox="0 0 17 11"><rect x="0.600" y="0.600" width="15.400" height="9.200" fill="none" stroke="#333" stroke-width="1.100"/></svg>
<svg style="left:739px;top:84px;" width="17" height="11" viewBox="0 0 17 11"><rect x="0.600" y="0.600" width="15.400" height="9.200" fill="none" stroke="#333" stroke-width="1.100"/><text x="8.300" y="8.200" text-anchor="middle" font-family="Liberation Sans,sans-serif" font-size="8" fill="#777">lab</text></svg>
<svg style="left:766px;top:84px;" width="17" height="12" viewBox="0 0 17 12"><rect x="0.600" y="0.600" width="15.400" height="7.600" fill="none" stroke="#333" stroke-width="1.100"/><path d="M1.500 10.500H15.500" stroke="#333" stroke-width="1.100"/></svg>
<svg style="left:793px;top:84px;" width="17" height="11" viewBox="0 0 17 11"><rect x="0.600" y="0.600" width="15.400" height="9.200" fill="none" stroke="#333" stroke-width="1.100"/><path d="M8.500 3.500H14L11.200 7Z" fill="#333"/></svg>
<svg style="left:820px;top:81px;" width="17" height="16" viewBox="0 0 17 16"><rect x="0.600" y="0.600" width="15.400" height="14.800" fill="none" stroke="#333" stroke-width="1.100"/><path d="M0.600 4.500H16" stroke="#333" stroke-width="1.100"/><path d="M11 1.800H14.500L12.700 3.600Z" fill="#333"/><rect x="3" y="7" width="2.200" height="2.200" fill="none" stroke="#333" stroke-width="0.900"/><rect x="3" y="11" width="2.200" height="2.200" fill="none" stroke="#333" stroke-width="0.900"/></svg>
<svg style="left:847px;top:81px;" width="17" height="16" viewBox="0 0 17 16"><rect x="0.600" y="1.600" width="15.400" height="13.800" fill="none" stroke="#333" stroke-width="1.100"/><path d="M0.600 4.500H16M4 0V2.500M12.500 0V2.500" stroke="#333" stroke-width="1.100"/><rect x="3" y="9.5" width="1.800" height="1.800" fill="#333"/><rect x="3" y="12.5" width="1.800" height="1.800" fill="#333"/><rect x="6" y="6.5" width="1.800" height="1.800" fill="#333"/><rect x="6" y="9.5" width="1.800" height="1.800" fill="#333"/><rect x="6" y="12.5" width="1.800" height="1.800" fill="#333"/><rect x="9" y="6.5" width="1.800" height="1.800" fill="#333"/><rect x="9" y="9.5" width="1.800" height="1.800" fill="#333"/><rect x="9" y="12.5" width="1.800" height="1.800" fill="#333"/><rect x="12" y="6.5" width="1.800" height="1.800" fill="#333"/><rect x="12" y="9.5" width="1.800" height="1.800" fill="#333"/><rect x="12" y="12.5" width="1.800" height="1.800" fill="#333"/></svg>
<svg style="left:874px;top:84px;" width="17" height="11" viewBox="0 0 17 11"><rect x="0.600" y="0.600" width="15.400" height="9.200" fill="none" stroke="#333" stroke-width="1.100"/><text x="8.300" y="8.300" text-anchor="middle" font-family="Liberation Sans,sans-serif" font-size="8" fill="#777">123</text></svg>
<svg style="left:901px;top:81px;" width="17" height="16" viewBox="0 0 17 16"><rect x="0.600" y="0.600" width="15.400" height="14.800" fill="none" stroke="#333" stroke-width="1.100"/><path d="M0.600 4.500H16M3 7.500H13.500M5 10H11.500M3.500 12.500H13" stroke="#333" stroke-width="1"/><path d="M11 1.800H14.500L12.700 3.600Z" fill="#333"/></svg>
<svg style="left:927px;top:82px;" width="17" height="15" viewBox="0 0 17 15"><circle cx="3.500" cy="3.200" r="2.600" fill="none" stroke="#333" stroke-width="1.100"/><circle cx="3.500" cy="3.200" r="1" fill="#333"/><circle cx="3.500" cy="11.800" r="2.600" fill="none" stroke="#333" stroke-width="1.100"/><circle cx="3.500" cy="11.800" r="1" fill="#333"/><path d="M8.500 3.200H15.500M8.500 11.800H15.500" stroke="#333" stroke-width="1.100"/></svg>
<svg style="left:954px;top:82px;" width="17" height="15" viewBox="0 0 17 15"><rect x="0.900" y="0.600" width="5.200" height="5.200" rx="1" fill="none" stroke="#333" stroke-width="1.100"/><rect x="0.900" y="9.200" width="5.200" height="5.200" rx="1" fill="none" stroke="#333" stroke-width="1.100"/><path d="M2.300 3.500L3.300 4.500L5 2M2.300 12L3.300 13L5 10.500" fill="none" stroke="#333" stroke-width="0.900"/><path d="M8.500 3.200H15.500M8.500 11.800H15.500" stroke="#333" stroke-width="1.100"/></svg>
<div style="left:979.5px;top:79px;width:1.5px;height:20px;background:#ebe7da;"></div>
<svg style="left:991px;top:82px;" width="14" height="15" viewBox="0 0 14 15"><path d="M11 6V3.500L8 0.600H0.600V13.400H5" fill="none" stroke="#333" stroke-width="1.100"/><path d="M8 0.600V3.500H11" fill="none" stroke="#333" stroke-width="1.100"/><circle cx="8.300" cy="9.800" r="2.800" fill="none" stroke="#333" stroke-width="1.100"/><path d="M10.300 11.800L12.800 14.300" stroke="#333" stroke-width="1.300"/></svg>
<span class="t" style="left:833px;top:115.6px;">Widget</span>
<svg style="left:1002px;top:117px;" width="9" height="6" viewBox="0 0 9 6"><path d="M0.600 0.600L4.500 4.600L8.400 0.600" fill="none" stroke="#333" stroke-width="1.100"/></svg>
<div style="left:1018.5px;top:76px;width:1.5px;height:50px;background:#ebe7da;"></div>
<div style="left:296px;top:133px;width:834px;height:767px;background:#fff;"></div>
<div style="left:296px;top:201px;width:834px;height:1px;background:#cfcfcf;"></div>
<div style="left:296px;top:239px;width:834px;height:1px;background:#cfcfcf;"></div>
<div style="left:592px;top:239px;width:1px;height:36px;background:#cfcfcf;"></div>
<div style="left:296px;top:274px;width:834px;height:3px;background:#d0d0d0;"></div>
<div style="left:590px;top:274px;width:4px;height:236px;background:#d0d0d0;"></div>
<div style="left:1127px;top:274px;width:2px;height:236px;background:#d4d4d4;"></div>
<div style="left:296px;top:288px;width:228px;height:1px;background:#8a8a8a;"></div>
<div style="left:296px;top:310px;width:228px;height:1px;background:#8a8a8a;"></div>
<div style="left:296px;top:333px;width:228px;height:1px;background:#8a8a8a;"></div>
<div style="left:296px;top:355px;width:228px;height:1px;background:#8a8a8a;"></div>
<div style="left:296px;top:377px;width:228px;height:1px;background:#8a8a8a;"></div>
<div style="left:296px;top:399px;width:228px;height:1px;background:#8a8a8a;"></div>
<div style="left:296px;top:422px;width:228px;height:1px;background:#8a8a8a;"></div>
<div style="left:296px;top:444px;width:228px;height:1px;background:#8a8a8a;"></div>
<div style="left:523px;top:444px;width:1px;height:4px;background:#8a8a8a;"></div>
<span class="s" style="left:530px;top:282.2px;font-size:12px;line-height:13.8px;color:#c0c0c0;letter-spacing:0.8px">10000%</span>
<span class="s" style="left:530px;top:312.7px;font-size:12px;line-height:13.8px;color:#c0c0c0;letter-spacing:0.8px">8000%</span>
<span class="s" style="left:530px;top:344.2px;font-size:12px;line-height:13.8px;color:#c0c0c0;letter-spacing:0.8px">6000%</span>
<span class="s" style="left:530px;top:375.2px;font-size:12px;line-height:13.8px;color:#c0c0c0;letter-spacing:0.8px">4000%</span>
<span class="s" style="left:530px;top:406.7px;font-size:12px;line-height:13.8px;color:#c0c0c0;letter-spacing:0.8px">2000%</span>
<span class="s" style="left:530px;top:437.7px;font-size:12px;line-height:13.8px;color:#c0c0c0;letter-spacing:0.8px">0%</span>
<div style="left:315px;top:388px;width:23px;height:56px;background:#fdc962;border-radius:4px"></div>
<div style="left:344px;top:355px;width:23px;height:89px;background:#fdcaca;border-radius:4px"></div>
<div style="left:388px;top:366px;width:23px;height:78px;background:#fdc962;border-radius:4px"></div>
<div style="left:417px;top:310px;width:24px;height:134px;background:#fdcaca;border-radius:4px"></div>
<div style="left:461px;top:333px;width:23px;height:111px;background:#fdc962;border-radius:4px"></div>
<div style="left:490px;top:366px;width:24px;height:78px;background:#fdcaca;border-radius:4px"></div>
<svg style="left:296px;top:280px;" width="300" height="180" viewBox="0 0 300 180"><path d="M-8 79.500L45 74.500L118.500 101L191 93.500" fill="none" stroke="#fdcaca" stroke-width="2" transform="translate(0,0)"/><path d="M-20 136L19 139.500L45 142.700L118.500 53.700L191 30.600" fill="none" stroke="#fdc962" stroke-width="2"/></svg>
<span class="s" style="left:310px;top:454.1px;font-size:13px;line-height:14.9px;color:#c0c0c0;letter-spacing:0.1px">Category4</span>
<span class="s" style="left:383.5px;top:454.1px;font-size:13px;line-height:14.9px;color:#c0c0c0;letter-spacing:0.1px">Category5</span>
<span class="s" style="left:456.5px;top:454.1px;font-size:13px;line-height:14.9px;color:#c0c0c0;letter-spacing:0.1px">Category6</span>
<span class="s" style="left:293px;top:454.1px;font-size:13px;line-height:14.9px;color:#c0c0c0;left:290px">3</span>
<div style="left:330px;top:482px;width:9px;height:9px;background:#fdcaca;"></div>
<span class="s" style="left:345px;top:480.8px;font-size:11px;line-height:12.6px;color:#f1f1f1;font-style:italic">Series2</span>
<span class="s" style="left:297px;top:480.8px;font-size:11px;line-height:12.6px;color:#f1f1f1;font-style:italic">ies1</span>
<div style="left:620px;top:288px;width:449px;height:1px;background:#8a8a8a;"></div>
<div style="left:620px;top:311px;width:449px;height:1px;background:#8a8a8a;"></div>
<div style="left:620px;top:334px;width:449px;height:1px;background:#8a8a8a;"></div>
<div style="left:620px;top:357px;width:449px;height:1px;background:#8a8a8a;"></div>
<div style="left:620px;top:380px;width:449px;height:1px;background:#8a8a8a;"></div>
<div style="left:620px;top:402px;width:449px;height:1px;background:#8a8a8a;"></div>
<div style="left:620px;top:425px;width:449px;height:1px;background:#8a8a8a;"></div>
<div style="left:620px;top:448px;width:449px;height:1px;background:#8a8a8a;"></div>
<span class="s" style="left:602px;top:282.2px;font-size:12px;line-height:13.8px;color:#c0c0c0;">70</span>
<span class="s" style="left:602px;top:304.7px;font-size:12px;line-height:13.8px;color:#c0c0c0;">60</span>
<span class="s" style="left:602px;top:328.2px;font-size:12px;line-height:13.8px;color:#c0c0c0;">50</span>
<span class="s" style="left:602px;top:351.2px;font-size:12px;line-height:13.8px;color:#c0c0c0;">40</span>
<span class="s" style="left:602px;top:373.7px;font-size:12px;line-height:13.8px;color:#c0c0c0;">30</span>
<span class="s" style="left:602px;top:396.2px;font-size:12px;line-height:13.8px;color:#c0c0c0;">20</span>
<span class="s" style="left:602px;top:418.7px;font-size:12px;line-height:13.8px;color:#c0c0c0;">10</span>
<span class="s" style="left:608.5px;top:441.7px;font-size:12px;line-height:13.8px;color:#c0c0c0;">0</span>
<span class="s" style="left:1075px;top:282.2px;font-size:12px;line-height:13.8px;color:#c0c0c0;">10000%</span>
<span class="s" style="left:1075px;top:313.7px;font-size:12px;line-height:13.8px;color:#c0c0c0;">8000%</span>
<span class="s" style="left:1075px;top:345.7px;font-size:12px;line-height:13.8px;color:#c0c0c0;">6000%</span>
<span class="s" style="left:1075px;top:377.7px;font-size:12px;line-height:13.8px;color:#c0c0c0;">4000%</span>
<span class="s" style="left:1075px;top:409.7px;font-size:12px;line-height:13.8px;color:#c0c0c0;">2000%</span>
<span class="s" style="left:1075px;top:441.7px;font-size:12px;line-height:13.8px;color:#c0c0c0;">0%</span>
<div style="left:630px;top:357px;width:24px;height:91px;background:#69f5dd;border-radius:4px"></div>
<div style="left:660px;top:368px;width:24px;height:80px;background:#66a3f8;border-radius:4px"></div>
<div style="left:705px;top:334px;width:24px;height:114px;background:#69f5dd;border-radius:4px"></div>
<div style="left:735px;top:430px;width:24px;height:18px;background:#66a3f8;border-radius:4px"></div>
<div style="left:780px;top:400px;width:24px;height:48px;background:#69f5dd;border-radius:4px"></div>
<div style="left:810px;top:420px;width:24px;height:28px;background:#66a3f8;border-radius:4px"></div>
<div style="left:855px;top:425px;width:24px;height:23px;background:#69f5dd;border-radius:4px"></div>
<div style="left:885px;top:357px;width:24px;height:91px;background:#66a3f8;border-radius:4px"></div>
<div style="left:929px;top:368px;width:24px;height:80px;background:#69f5dd;border-radius:4px"></div>
<div style="left:960px;top:311px;width:24px;height:137px;background:#66a3f8;border-radius:4px"></div>
<div style="left:1005px;top:334px;width:24px;height:114px;background:#69f5dd;border-radius:4px"></div>
<div style="left:1035px;top:368px;width:24px;height:80px;background:#66a3f8;border-radius:4px"></div>
<svg style="left:596px;top:280px;" width="500" height="180" viewBox="0 0 500 180"><path d="M75 88C95 70 115 48 136 48S180 82 207 82.500S260 76 285 76S335 106 360 106S410 97 435 95.700" fill="none" stroke="#66a3f8" stroke-width="1.700"/><path d="M210 120C240 120 260 150 285 145S335 62 363 52S410 36 435 31.400" fill="none" stroke="#69f5dd" stroke-width="1.700"/></svg>
<span class="s" style="left:925px;top:454.1px;font-size:13px;line-height:14.9px;color:#c0c0c0;letter-spacing:0.1px">Category5</span>
<span class="s" style="left:1000px;top:454.1px;font-size:13px;line-height:14.9px;color:#c0c0c0;letter-spacing:0.1px">Category6</span>
<span class="s" style="left:627px;top:454.1px;font-size:13px;line-height:14.9px;color:#c0c0c0;letter-spacing:0.1px">Category1</span>
<span class="s" style="left:701px;top:454.1px;font-size:13px;line-height:14.9px;color:#c0c0c0;letter-spacing:0.1px">Category2</span>
<span class="s" style="left:776px;top:454.1px;font-size:13px;line-height:14.9px;color:#c0c0c0;letter-spacing:0.1px">Category3</span>
<span class="s" style="left:850.5px;top:454.1px;font-size:13px;line-height:14.9px;color:#c0c0c0;letter-spacing:0.1px">Category4</span>
<div style="left:296px;top:512px;width:834px;height:20px;background:#e8e8e8;"></div>
<div style="left:1027px;top:512px;width:102px;height:20px;background:#fff;"></div>
<div style="left:395px;top:512px;width:1px;height:20px;background:#d9d9d9;"></div>
<div style="left:395px;top:532px;width:1px;height:298px;background:#c9c9c9;"></div>
<div style="left:490px;top:512px;width:1px;height:20px;background:#d9d9d9;"></div>
<div style="left:490px;top:532px;width:1px;height:298px;background:#c9c9c9;"></div>
<div style="left:645px;top:512px;width:1px;height:20px;background:#d9d9d9;"></div>
<div style="left:645px;top:532px;width:1px;height:298px;background:#c9c9c9;"></div>
<div style="left:710px;top:512px;width:1px;height:20px;background:#d9d9d9;"></div>
<div style="left:710px;top:532px;width:1px;height:298px;background:#c9c9c9;"></div>
<div style="left:795px;top:512px;width:1px;height:20px;background:#d9d9d9;"></div>
<div style="left:795px;top:532px;width:1px;height:298px;background:#c9c9c9;"></div>
<div style="left:872px;top:512px;width:1px;height:20px;background:#d9d9d9;"></div>
<div style="left:872px;top:532px;width:1px;height:298px;background:#c9c9c9;"></div>
<div style="left:1027px;top:512px;width:1px;height:20px;background:#d9d9d9;"></div>
<div style="left:1027px;top:532px;width:1px;height:298px;background:#c9c9c9;"></div>
<div style="left:1081px;top:512px;width:1px;height:20px;background:#d9d9d9;"></div>
<div style="left:1081px;top:532px;width:1px;height:298px;background:#c9c9c9;"></div>
<div style="left:296px;top:531px;width:834px;height:1px;background:#c9c9c9;"></div>
<div style="left:296px;top:538px;width:834px;height:1px;background:#c9c9c9;"></div>
<div style="left:296px;top:726px;width:834px;height:1px;background:#c9c9c9;"></div>
<div style="left:296px;top:740px;width:834px;height:1px;background:#c9c9c9;"></div>
<div style="left:296px;top:755px;width:834px;height:1px;background:#c9c9c9;"></div>
<div style="left:296px;top:769px;width:834px;height:1px;background:#c9c9c9;"></div>
<div style="left:296px;top:783px;width:834px;height:1px;background:#c9c9c9;"></div>
<div style="left:296px;top:798px;width:834px;height:1px;background:#c9c9c9;"></div>
<div style="left:296px;top:812px;width:834px;height:1px;background:#c9c9c9;"></div>
<div style="left:296px;top:827px;width:834px;height:1px;background:#c9c9c9;"></div>
<span class="s" style="left:338px;top:516.7px;font-size:12px;line-height:13.8px;color:#111;width:10px;text-align:center">D</span>
<span class="s" style="left:437.5px;top:516.7px;font-size:12px;line-height:13.8px;color:#111;width:10px;text-align:center">E</span>
<span class="s" style="left:561.5px;top:516.7px;font-size:12px;line-height:13.8px;color:#111;width:10px;text-align:center">F</span>
<span class="s" style="left:672.5px;top:516.7px;font-size:12px;line-height:13.8px;color:#111;width:10px;text-align:center">G</span>
<span class="s" style="left:747.5px;top:516.7px;font-size:12px;line-height:13.8px;color:#111;width:10px;text-align:center">H</span>
<span class="s" style="left:828.5px;top:516.7px;font-size:12px;line-height:13.8px;color:#111;width:10px;text-align:center">I</span>
<span class="s" style="left:944.5px;top:516.7px;font-size:12px;line-height:13.8px;color:#111;width:10px;text-align:center">J</span>
<span class="s" style="left:1049px;top:516.7px;font-size:12px;line-height:13.8px;color:#111;width:10px;text-align:center">K</span>
<span class="s" style="left:1102.5px;top:516.7px;font-size:12px;line-height:13.8px;color:#111;width:10px;text-align:center">L</span>
<div style="left:296px;top:538px;width:732px;height:25px;background:#2f7483;"></div>
<div style="left:296px;top:562px;width:732px;height:165px;background:#245668;"></div>
<div style="left:395px;top:562px;width:1px;height:165px;background:#0d232d;"></div>
<div style="left:490px;top:562px;width:1px;height:165px;background:#0d232d;"></div>
<div style="left:645px;top:562px;width:1px;height:165px;background:#0d232d;"></div>
<div style="left:710px;top:562px;width:1px;height:165px;background:#0d232d;"></div>
<div style="left:795px;top:562px;width:1px;height:165px;background:#0d232d;"></div>
<div style="left:872px;top:562px;width:1px;height:165px;background:#0d232d;"></div>
<div style="left:395px;top:538px;width:1px;height:24px;background:#0d232d;"></div>
<div style="left:645px;top:538px;width:1px;height:24px;background:#0d232d;"></div>
<div style="left:710px;top:538px;width:1px;height:24px;background:#0d232d;"></div>
<div style="left:795px;top:538px;width:1px;height:24px;background:#0d232d;"></div>
<div style="left:296px;top:562px;width:732px;height:1px;background:#0d232d;"></div>
<div style="left:296px;top:726px;width:732px;height:1px;background:#0d232d;"></div>
<div style="left:1027px;top:538px;width:1px;height:189px;background:#0d232d;"></div>
<div style="left:296px;top:538px;width:732px;height:1px;background:#0d232d;"></div>
<div class="c" style="left:296px;top:543.5px;width:99px;font-size:12.6px;line-height:16px;">Completion</div>
<div class="c" style="left:395px;top:543.5px;width:250px;font-size:12.6px;line-height:16px;">Monthly Completion Rate</div>
<div style="left:645px;top:539px;width:150px;height:23px;overflow:hidden"><div class="c" style="left:0;top:16px;width:65px;font-size:12.600px;line-height:16px">Target</div><div class="c" style="left:65px;top:16px;width:85px;font-size:12.600px;line-height:16px">Total</div></div>
<div class="c" style="left:795px;top:543.5px;width:232px;font-size:12.6px;line-height:16px;">Monthly Completion Rate</div>
<div class="c" style="left:296px;top:635.0px;width:99px;font-size:9.8px;line-height:11.05px;-webkit-text-stroke-width:0.450px;">Sign_Month.求和(sign<br>amount)</div>
<div class="c" style="left:395px;top:629.1px;width:95px;font-size:9.7px;line-height:11.05px;-webkit-text-stroke-width:0.450px;">=IF(OR(C3 = 0, LEN(<br>C3) = 0), &quot;-&quot;, D3 /<br>C3)</div>
<div class="c" style="left:490px;top:591.0px;width:155px;font-size:10.3px;line-height:11.05px;-webkit-text-stroke-width:0.450px;">=&quot;&lt;table width=&quot; + E3 * 100 + &quot;%<br>border=0 cellspacing=0<br>cellpadding=0 height=&#x27;3&#x27;&gt; &lt;tr&gt;<br>&lt;td bgcolor=&#x27;&quot; + if(ROUND(E3 *<br>100, 2) &gt; 100, &quot;#55f7f9 &quot;, if(<br>ROUND(E3 * 100, 2) &gt; 80, &quot;#<br>428df6&quot;, if(ROUND(E3 * 100, 2) &gt;<br>60, &quot;#42cbe3&quot;, &quot;#bdf529&quot;))) + &quot;&#x27;&gt;<br>&lt;div color=#ffffff align=right&gt;<br>&lt;/div&gt;&lt;/td&gt; &lt;/tr&gt; &lt;/table&gt;&quot;</div>
<div class="c" style="left:645px;top:635.0px;width:65px;font-size:10.3px;line-height:11.05px;-webkit-text-stroke-width:0.450px;">Plan_Year.求<br>和(sales plan)</div>
<div class="c" style="left:710px;top:635.0px;width:85px;font-size:10.3px;line-height:11.05px;-webkit-text-stroke-width:0.450px;">Sign_Year.求和(<br>sign amount)</div>
<div class="c" style="left:795px;top:629.4px;width:77px;font-size:10.3px;line-height:11.05px;-webkit-text-stroke-width:0.450px;">=IF(OR(G3 = 0,<br>LEN(G3) = 0),<br>&quot;-&quot;, H3 / G3)</div>
<div class="c" style="left:872px;top:591.0px;width:155px;font-size:10.3px;line-height:11.05px;-webkit-text-stroke-width:0.450px;">=&quot;&lt;table width=&quot; + I3 * 100 + &quot;%<br>border=0 cellspacing=0<br>cellpadding=0 height=&#x27;3&#x27;&gt; &lt;tr&gt;<br>&lt;td bgcolor=&#x27;&quot; + if(ROUND(I3 *<br>100, 2) &gt; 100, &quot;#55f7f9 &quot;, if(<br>ROUND(I3 * 100, 2) &gt; 80, &quot;#<br>428df6&quot;, if(ROUND(I3 * 100, 2) &gt;<br>60, &quot;#42cbe3&quot;, &quot;#bdf529&quot;))) + &quot;&#x27;&gt;<br>&lt;div color=#ffffff align=right&gt;<br>&lt;/div&gt;&lt;/td&gt; &lt;/tr&gt; &lt;/table&gt;&quot;</div>
<svg style="left:647px;top:563px;" width="5" height="7" viewBox="0 0 5 7"><path d="M2.500 0V6M0.500 3.500L2.500 6L4.500 3.500" stroke="#8a9aa3" stroke-width="1" fill="none"/></svg>
<svg style="left:396px;top:563px;" width="5" height="5" viewBox="0 0 5 5"><path d="M0 0H5L0 5Z" fill="#e8173a"/></svg>
<svg style="left:796px;top:563px;" width="5" height="5" viewBox="0 0 5 5"><path d="M0 0H5L0 5Z" fill="#e8173a"/></svg>
<div style="left:296px;top:561px;width:1.5px;height:5px;background:#2a7fff;"></div>
<svg style="left:296px;top:721px;" width="5" height="5" viewBox="0 0 5 5"><path d="M0 0L5 5H0Z" fill="#f5c518"/></svg>
<svg style="left:646px;top:721px;" width="5" height="5" viewBox="0 0 5 5"><path d="M0 0L5 5H0Z" fill="#f5c518"/></svg>
<svg style="left:711px;top:721px;" width="5" height="5" viewBox="0 0 5 5"><path d="M0 0L5 5H0Z" fill="#f5c518"/></svg>
<div style="left:296px;top:510px;width:834px;height:2px;background:#8bbcf5;"></div>
<div style="left:296px;top:830px;width:834px;height:2px;background:#8bbcf5;"></div>
<div style="left:1127px;top:510px;width:2px;height:322px;background:#8bbcf5;"></div>
<div style="left:589px;top:506px;width:6px;height:5px;background:#fff;border:1px solid #8bbcf5;box-sizing:border-box"></div>
<div style="left:289px;top:481px;width:1px;height:6px;background:#999;"></div>
<div style="left:291px;top:481px;width:1px;height:6px;background:#999;"></div>
<div style="left:1130px;top:133px;width:16px;height:768px;background:#f8f8f5;"></div>
<div style="left:1129px;top:149px;width:1px;height:737px;background:#ece9df;"></div>
<div style="left:1145px;top:149px;width:1px;height:737px;background:#ece9df;"></div>
<div style="left:1130px;top:886px;width:16px;height:15px;background:#ececea;"></div>
<div style="left:1130px;top:134px;width:16px;height:16px;background:#ececea;"></div>
<svg style="left:1132px;top:137px;" width="12" height="8" viewBox="0 0 12 8"><path d="M1.500 6.500L6 2L10.500 6.500" fill="none" stroke="#b8b8b8" stroke-width="1.900"/></svg>
<svg style="left:1132px;top:889px;" width="12" height="8" viewBox="0 0 12 8"><path d="M1.500 1.500L6 6L10.500 1.500" fill="none" stroke="#b8b8b8" stroke-width="1.900"/></svg>
<div style="left:296px;top:901px;width:850px;height:17px;background:#fff;"></div>
<div style="left:313px;top:901px;width:181px;height:16px;background:#f8f8f5;"></div>
<div style="left:494px;top:901px;width:618px;height:16px;background:#e2e2e2;"></div>
<svg style="left:299px;top:904px;" width="8" height="11" viewBox="0 0 8 11"><path d="M6.500 1.300L1.800 5.500L6.500 9.700" fill="none" stroke="#555" stroke-width="1.900"/></svg>
<svg style="left:1118px;top:904px;" width="8" height="11" viewBox="0 0 8 11"><path d="M1.500 1.300L6.200 5.500L1.500 9.700" fill="none" stroke="#555" stroke-width="1.900"/></svg>
<div style="left:296px;top:918px;width:850px;height:18px;background:#f5f5f7;"></div>
<span class="t" style="left:297px;top:924.6px;">form</span>
<div style="left:581px;top:918px;width:60px;height:19px;background:#fff;border:1px solid #e3e3e6;box-sizing:border-box"></div>
<span class="s" style="left:600px;top:922.2px;font-size:12px;line-height:13.8px;color:#000;">898</span>
<span class="t" style="left:648px;top:924.6px;">Pixel x</span>
<div style="left:701px;top:918px;width:60px;height:19px;background:#fff;border:1px solid #e3e3e6;box-sizing:border-box"></div>
<span class="s" style="left:720px;top:922.2px;font-size:12px;line-height:13.8px;color:#000;">527</span>
<span class="t" style="left:769px;top:924.6px;">Pixel</span>
<div style="left:830px;top:928px;width:10px;height:1px;background:#333;"></div>
<div style="left:848px;top:928px;width:214px;height:1px;background:#dcdcdf;"></div>
<div style="left:951px;top:922px;width:4px;height:13px;background:#333;border-radius:2px"></div>
<div style="left:1076px;top:928px;width:10px;height:1px;background:#333;"></div>
<div style="left:1080.5px;top:923px;width:1px;height:10px;background:#333;"></div>
<div style="left:1094px;top:918px;width:35px;height:19px;background:#fff;border:1px solid #e3e3e6;box-sizing:border-box"></div>
<span class="s" style="left:1098.5px;top:922.2px;font-size:12px;line-height:13.8px;color:#000;">100</span>
<span class="t" style="left:1133px;top:924.6px;">%</span>
<div style="left:1146px;top:20px;width:40px;height:916px;background:#e9e9eb;"></div>
<svg style="left:1164px;top:27px;" width="6" height="10" viewBox="0 0 6 10"><path d="M0 0V10L6 5Z" fill="#a0a0a0"/></svg>
<div style="left:1150px;top:49px;width:32px;height:28px;background:#f5f5f7;"></div>
<svg style="left:1158px;top:57px;" width="16" height="12" viewBox="0 0 16 12"><rect x="0" y="0" width="16" height="11.500" rx="1" fill="#4298f8"/><path d="M7 4H12L9.500 7.500Z" fill="#fff"/></svg>
<svg style="left:1158px;top:88px;" width="16" height="14" viewBox="0 0 16 14"><rect x="0.700" y="0.700" width="14.600" height="3.600" fill="none" stroke="#595963" stroke-width="1.700"/><rect x="0.700" y="8" width="8" height="5.300" fill="none" stroke="#595963" stroke-width="1.700"/><rect x="11.500" y="8" width="3.800" height="5.300" fill="none" stroke="#595963" stroke-width="1.700"/></svg>
<div style="left:1186px;top:20px;width:300px;height:916px;background:#f5f5f7;"></div>
<div style="left:1485px;top:0px;width:1px;height:936px;background:#fcfcfd;"></div>
<span class="t" style="left:1196px;top:30.1px;">Component Settings</span>
<svg style="left:1469px;top:27px;" width="12" height="12" viewBox="0 0 12 12"><path d="M11 1L2 10" stroke="#4298f8" stroke-width="1.800"/><path d="M1 4.500V11H7.500Z" fill="#4298f8"/></svg>
<div style="left:1186px;top:46px;width:300px;height:1px;background:#e3e3e6;"></div>
<svg style="left:1203px;top:52px;" width="17" height="17" viewBox="0 0 17 17"><path d="M4 0.500L11.200 11.800M13 0.500L5.800 11.800" stroke="#333" stroke-width="1.500" fill="none"/><circle cx="4.200" cy="13.300" r="2.500" fill="none" stroke="#4298f8" stroke-width="1.700"/><circle cx="12.800" cy="13.300" r="2.500" fill="none" stroke="#4298f8" stroke-width="1.700"/></svg>
<svg style="left:1229px;top:52px;" width="17" height="17" viewBox="0 0 17 17"><path d="M0.600 0.600H5.500L8.500 3.600V10.500H0.600Z" fill="#fff" stroke="#333" stroke-width="1.200"/><path d="M6.600 5.600H12L15.400 9V16.400H6.600Z" fill="#fdf3dc" stroke="#333" stroke-width="1.200"/></svg>
<svg style="left:1255px;top:51px;" width="17" height="17" viewBox="0 0 17 17"><path d="M0 1.500H10.500V13.500H0Z" fill="#f0a920"/><rect x="3" y="0" width="4.500" height="2.500" fill="#f5f5f7" stroke="#d08a10" stroke-width="0.800"/><path d="M6.600 6.600H12.500L15.400 9.500V16.400H6.600Z" fill="#fdf3dc" stroke="#333" stroke-width="1.200"/></svg>
<svg style="left:1283px;top:55px;" width="12" height="12" viewBox="0 0 12 12"><path d="M1 1L11 11M11 1L1 11" stroke="#e8262a" stroke-width="1.600" fill="none"/></svg>
<div style="left:1305px;top:52px;width:1px;height:16px;background:#dfdfe2;"></div>
<svg style="left:1315px;top:53px;" width="12" height="15" viewBox="0 0 12 15"><path d="M1 1H11M6 14V4M2 8L6 4L10 8" stroke="#666" stroke-width="1.500" fill="none"/></svg>
<svg style="left:1341px;top:53px;" width="12" height="15" viewBox="0 0 12 15"><path d="M1 14H11M6 1V11M2 7L6 11L10 7" stroke="#666" stroke-width="1.500" fill="none"/></svg>
<svg style="left:1367px;top:53px;" width="12" height="15" viewBox="0 0 12 15"><path d="M6 14V2M1.500 6.500L6 2L10.500 6.500" stroke="#666" stroke-width="1.500" fill="none"/></svg>
<svg style="left:1393px;top:53px;" width="12" height="15" viewBox="0 0 12 15"><path d="M6 1V13M1.500 8.500L6 13L10.500 8.500" stroke="#666" stroke-width="1.500" fill="none"/></svg>
<div style="left:1196px;top:72px;width:280px;height:1px;background:#e3e3e6;"></div>
<div style="left:1208px;top:96px;width:1px;height:8px;background:#ececef;"></div>
<div style="left:1229px;top:114px;width:1px;height:66px;background:#ececef;"></div>
<div style="left:1229px;top:125px;width:11px;height:1px;background:#ececef;"></div>
<div style="left:1229px;top:143px;width:11px;height:1px;background:#ececef;"></div>
<div style="left:1229px;top:161px;width:11px;height:1px;background:#ececef;"></div>
<div style="left:1229px;top:179px;width:11px;height:1px;background:#ececef;"></div>
<svg style="left:1201px;top:82px;" width="15" height="14" viewBox="0 0 15 14"><rect x="0.600" y="0.600" width="13.800" height="12.800" fill="#bcd6f8" stroke="#555" stroke-width="1.100"/><rect x="1.200" y="1.200" width="12.600" height="3" fill="#fff"/><path d="M0.600 4.500H14.400" stroke="#555"/></svg>
<span class="t" style="left:1221.5px;top:86.1px;">form</span>
<svg style="left:1205px;top:105px;" width="9" height="5" viewBox="0 0 9 5"><path d="M0 0H9L4.500 5Z" fill="#b4b4b4"/></svg>
<svg style="left:1221px;top:100px;" width="15" height="14" viewBox="0 0 15 14"><rect x="0.600" y="0.600" width="13.800" height="12.800" fill="#fff" stroke="#555" stroke-width="1.100"/><rect x="3" y="2.500" width="6" height="5.500" fill="#3a86d8"/><rect x="6" y="5.500" width="6" height="6" fill="#bcd6f8"/></svg>
<span class="t" style="left:1241.5px;top:103.6px;">body</span>
<svg style="left:1241px;top:120px;" width="16" height="10" viewBox="0 0 16 10"><rect x="0.700" y="0.700" width="14.600" height="8.600" fill="#fff" stroke="#333" stroke-width="1.300"/></svg>
<span class="t" style="left:1261.5px;top:121.6px;">button0</span>
<div style="left:1260px;top:134px;width:46px;height:18px;background:#4198f8;"></div>
<svg style="left:1241px;top:138px;" width="16" height="10" viewBox="0 0 16 10"><rect x="0.600" y="0.600" width="14.800" height="8.800" fill="#fff" stroke="#6d8fc4" stroke-width="1.100"/></svg>
<span class="t" style="left:1261.5px;top:140.1px;color:#fff;">report0</span>
<svg style="left:1241px;top:154px;" width="16" height="15" viewBox="0 0 16 15"><rect x="0" y="5" width="4" height="10" fill="#9cc544"/><rect x="4" y="0" width="4" height="15" fill="#e5352d"/><rect x="8" y="3" width="4" height="12" fill="#2d7fd0"/><path d="M6 13L12 5L15 7.500L9.500 15H6Z" fill="#f2a33a"/><path d="M6 13V15H8Z" fill="#c77"/></svg>
<span class="t" style="left:1261.5px;top:157.6px;">chart2</span>
<svg style="left:1241px;top:172px;" width="16" height="15" viewBox="0 0 16 15"><rect x="0" y="5" width="4" height="10" fill="#9cc544"/><rect x="4" y="0" width="4" height="15" fill="#e5352d"/><rect x="8" y="3" width="4" height="12" fill="#2d7fd0"/><path d="M6 13L12 5L15 7.500L9.500 15H6Z" fill="#f2a33a"/><path d="M6 13V15H8Z" fill="#c77"/></svg>
<span class="t" style="left:1261.5px;top:175.6px;">chart0</span>
<div style="left:1186px;top:256px;width:300px;height:30px;background:#dfdfe2;"></div>
<div style="left:1198px;top:256px;width:88px;height:30px;background:#f5f5f7;"></div>
<span class="t" style="left:1206px;top:269.6px;">Attributes</span>
<span class="t" style="left:1321px;top:269.6px;">Event</span>
<span class="t" style="left:1396.5px;top:261.6px;">Mobile</span>
<span class="t" style="left:1396.5px;top:276.1px;">Terminal</span>
<div style="left:1196px;top:296px;width:278px;height:20px;background:#ebebee;"></div>
<span class="t" style="left:1201px;top:302.1px;">Basic</span>
<svg style="left:1460px;top:306.5px;" width="8" height="5" viewBox="0 0 8 5"><path d="M0 0H8L4 4.500Z" fill="#b4b4b4"/></svg>
<span class="t" style="left:1201px;top:333.1px;">Component Name</span>
<div style="left:1310px;top:326px;width:164px;height:20px;background:#fff;border:1px solid #dcdcdf;box-sizing:border-box"></div>
<span class="s" style="left:1314.5px;top:330.2px;font-size:12px;line-height:13.8px;color:#111;">report0</span>
<div style="left:1201px;top:357px;width:13px;height:13px;background:#4298f8;"></div>
<svg style="left:1201px;top:357px;" width="13" height="13" viewBox="0 0 13 13"><path d="M2.500 6.500L5.500 9.500L10.500 3" fill="none" stroke="#fff" stroke-width="1.600"/></svg>
<span class="t" style="left:1218px;top:360.1px;">Visible</span>
<div style="left:1196px;top:381px;width:278px;height:20px;background:#ebebee;"></div>
<span class="t" style="left:1201px;top:387.1px;">Advanced</span>
<svg style="left:1460px;top:391.5px;" width="8" height="5" viewBox="0 0 8 5"><path d="M0 0H8L4 4.500Z" fill="#b4b4b4"/></svg>
<span class="t" style="left:1201px;top:418.1px;">Style</span>
<div style="left:1280px;top:411px;width:173px;height:20px;background:#fff;border:1px solid #dcdcdf;box-sizing:border-box"></div>
<span class="t" style="left:1281.5px;top:418.1px;">Standard</span>
<div style="left:1453px;top:411px;width:20px;height:20px;background:#e2e2e5;"></div>
<div style="left:1458.0px;top:420.5px;width:2px;height:1.5px;background:#555;"></div>
<div style="left:1461.5px;top:420.5px;width:2px;height:1.5px;background:#555;"></div>
<div style="left:1465.0px;top:420.5px;width:2px;height:1.5px;background:#555;"></div>
<span class="t" style="left:1201px;top:450.1px;">Padding</span>
<div style="left:1280px;top:446px;width:94px;height:20px;background:#e2e2e5;"></div>
<div style="left:1280px;top:446px;width:81px;height:20px;background:#fff;border:1px solid #dcdcdf;box-sizing:border-box"></div>
<span class="s" style="left:1285px;top:450.2px;font-size:12px;line-height:13.8px;color:#111;">1</span>
<svg style="left:1362.5px;top:448px;" width="10" height="16" viewBox="0 0 10 16"><path d="M1.500 5.500L5 2L8.500 5.500M1.500 10.5L5 14L8.500 10.5" fill="none" stroke="#444" stroke-width="1"/></svg>
<div style="left:1379px;top:446px;width:94px;height:20px;background:#e2e2e5;"></div>
<div style="left:1379px;top:446px;width:81px;height:20px;background:#fff;border:1px solid #dcdcdf;box-sizing:border-box"></div>
<span class="s" style="left:1384px;top:450.2px;font-size:12px;line-height:13.8px;color:#111;">1</span>
<svg style="left:1461.5px;top:448px;" width="10" height="16" viewBox="0 0 10 16"><path d="M1.500 5.500L5 2L8.500 5.500M1.500 10.5L5 14L8.500 10.5" fill="none" stroke="#444" stroke-width="1"/></svg>
<span class="t" style="left:1319px;top:474.6px;">Top</span>
<span class="t" style="left:1407.5px;top:474.6px;">Bottom</span>
<div style="left:1280px;top:496px;width:94px;height:20px;background:#e2e2e5;"></div>
<div style="left:1280px;top:496px;width:81px;height:20px;background:#fff;border:1px solid #dcdcdf;box-sizing:border-box"></div>
<span class="s" style="left:1285px;top:500.2px;font-size:12px;line-height:13.8px;color:#111;">1</span>
<svg style="left:1362.5px;top:498px;" width="10" height="16" viewBox="0 0 10 16"><path d="M1.500 5.500L5 2L8.500 5.500M1.500 10.5L5 14L8.500 10.5" fill="none" stroke="#444" stroke-width="1"/></svg>
<div style="left:1379px;top:496px;width:94px;height:20px;background:#e2e2e5;"></div>
<div style="left:1379px;top:496px;width:81px;height:20px;background:#fff;border:1px solid #dcdcdf;box-sizing:border-box"></div>
<span class="s" style="left:1384px;top:500.2px;font-size:12px;line-height:13.8px;color:#111;">1</span>
<svg style="left:1461.5px;top:498px;" width="10" height="16" viewBox="0 0 10 16"><path d="M1.500 5.500L5 2L8.500 5.500M1.500 10.5L5 14L8.500 10.5" fill="none" stroke="#444" stroke-width="1"/></svg>
<span class="t" style="left:1315px;top:525.1px;">Left</span>
<span class="t" style="left:1411px;top:525.1px;">Right</span>
<span class="t" style="left:1201px;top:562.6px;">Report Block Toolbar</span>
<div style="left:1324px;top:556px;width:128px;height:20px;background:#fff;border:1px solid #dcdcdf;box-sizing:border-box"></div>
<span class="s" style="left:1328.5px;top:560.2px;font-size:12px;line-height:13.8px;color:#111;">Close</span>
<div style="left:1452px;top:556px;width:21px;height:20px;background:#e2e2e5;"></div>
<div style="left:1457.5px;top:565.5px;width:2px;height:1.5px;background:#555;"></div>
<div style="left:1461.0px;top:565.5px;width:2px;height:1.5px;background:#555;"></div>
<div style="left:1464.5px;top:565.5px;width:2px;height:1.5px;background:#555;"></div>
<span class="t" style="left:1201px;top:598.1px;">Refresh</span>
<div style="left:1328px;top:591px;width:124px;height:20px;background:#fff;border:1px solid #dcdcdf;box-sizing:border-box"></div>
<span class="s" style="left:1332.5px;top:595.2px;font-size:12px;line-height:13.8px;color:#111;">Off</span>
<div style="left:1452px;top:591px;width:21px;height:20px;background:#d2d2d5;"></div>
<div style="left:1457.5px;top:600.5px;width:2px;height:1.5px;background:#555;"></div>
<div style="left:1461.0px;top:600.5px;width:2px;height:1.5px;background:#555;"></div>
<div style="left:1464.5px;top:600.5px;width:2px;height:1.5px;background:#555;"></div>
<span class="t" style="left:1201px;top:627.6px;">PC Browser Adaptive</span>
<div style="left:1328px;top:621px;width:127px;height:20px;background:#fff;border:1px solid #dcdcdf;box-sizing:border-box"></div>
<span class="t" style="left:1334.5px;top:628.1px;">Bidirectional Ad...</span>
<div style="left:1454px;top:621px;width:19px;height:20px;background:#e2e2e5;"></div>
<svg style="left:1459px;top:628px;" width="10" height="7" viewBox="0 0 10 7"><path d="M1 1L5 5L9 1" fill="none" stroke="#333" stroke-width="1.100"/></svg>
<div style="left:1196px;top:651px;width:278px;height:24px;background:#ebebee;"></div>
<span class="t" style="left:1201px;top:660.6px;">Coords &amp; Size</span>
<svg style="left:1460px;top:661.5px;" width="8" height="5" viewBox="0 0 8 5"><path d="M0 0H8L4 4.500Z" fill="#b4b4b4"/></svg>
<span class="t" style="left:1201px;top:694.1px;">Component Size</span>
<div style="left:1329px;top:685px;width:70px;height:20px;background:#e2e2e5;"></div>
<div style="left:1329px;top:685px;width:57px;height:20px;background:#fff;border:1px solid #dcdcdf;box-sizing:border-box"></div>
<span class="s" style="left:1334px;top:689.2px;font-size:12px;line-height:13.8px;color:#111;">1074</span>
<svg style="left:1387.5px;top:687px;" width="10" height="16" viewBox="0 0 10 16"><path d="M1.500 5.500L5 2L8.500 5.500M1.500 10.5L5 14L8.500 10.5" fill="none" stroke="#444" stroke-width="1"/></svg>
<div style="left:1404px;top:685px;width:70px;height:20px;background:#e2e2e5;"></div>
<div style="left:1404px;top:685px;width:57px;height:20px;background:#fff;border:1px solid #dcdcdf;box-sizing:border-box"></div>
<span class="s" style="left:1409px;top:689.2px;font-size:12px;line-height:13.8px;color:#111;">320</span>
<svg style="left:1462.5px;top:687px;" width="10" height="16" viewBox="0 0 10 16"><path d="M1.500 5.500L5 2L8.500 5.500M1.500 10.5L5 14L8.500 10.5" fill="none" stroke="#444" stroke-width="1"/></svg>
<span class="t" style="left:1349px;top:714.1px;">Width</span>
<span class="t" style="left:1421px;top:714.1px;">Height</span>
<div style="left:623px;top:375px;width:337px;height:4px;background:rgba(60,60,60,.28)"></div>
<div style="left:624px;top:380px;width:334px;height:31px;background:#fff;"></div>
<div style="left:624px;top:411px;width:334px;height:145px;background:#f5f5f7;"></div>
<div style="left:623px;top:379px;width:336px;height:1px;background:#555;"></div>
<div style="left:623px;top:379px;width:1px;height:177px;background:#777;"></div>
<div style="left:958px;top:379px;width:1px;height:177px;background:#555;"></div>
<span class="s" style="left:628px;top:386.2px;font-size:15.5px;line-height:17.8px;color:#111;">Refresh</span>
<svg style="left:930.5px;top:388.5px;" width="13" height="13" viewBox="0 0 13 13"><path d="M0.700 0.700L12.300 12.300M12.300 0.700L0.700 12.300" stroke="#222" stroke-width="1.200"/></svg>
<svg width="0" height="0" style="left:0;top:0"><defs><linearGradient id="rg" x1="0" y1="0" x2="1" y2="1"><stop offset="0" stop-color="#dedede"/><stop offset="0.6" stop-color="#ffffff"/></linearGradient></defs></svg>
<span class="t" style="left:628.5px;top:426.1px;">sh Type:</span>
<svg style="left:691.5px;top:422.5px;" width="14" height="14" viewBox="0 0 14 14"><circle cx="7" cy="7" r="6" fill="url(#rg)" stroke="#a8a8ab" stroke-width="1"/></svg>
<span class="t" style="left:708.5px;top:426.1px;">Off</span>
<svg style="left:740.5px;top:422.5px;" width="14" height="14" viewBox="0 0 14 14"><circle cx="7" cy="7" r="6" fill="url(#rg)" stroke="#a8a8ab" stroke-width="1"/></svg>
<span class="t" style="left:758px;top:426.1px;">Refresh Regularly</span>
<svg style="left:873.5px;top:422.5px;" width="14" height="14" viewBox="0 0 14 14"><circle cx="7" cy="7" r="6" fill="url(#rg)" stroke="#a8a8ab" stroke-width="1"/><circle cx="7" cy="7" r="2.300" fill="#4298f8"/></svg>
<div style="left:890px;top:420px;width:64px;height:20px;overflow:hidden"><span class="t" style="left:1px;top:6.100px">Monitor Refresh</span></div>
<span class="t" style="left:628.5px;top:455.1px;">val:</span>
<div style="left:694px;top:447px;width:13px;height:23px;background:#e2e2e5;"></div>
<div style="left:664px;top:447px;width:30px;height:23px;background:#fff;border:1px solid #dcdcdf;box-sizing:border-box"></div>
<span class="s" style="left:669px;top:452.7px;font-size:12px;line-height:13.8px;color:#111;">0</span>
<svg style="left:695px;top:450px;" width="11" height="17" viewBox="0 0 11 17"><path d="M2 5.500L5.500 2L9 5.500M2 11.500L5.500 15L9 11.500" fill="none" stroke="#444" stroke-width="1"/></svg>
<span class="t" style="left:713.5px;top:455.1px;">Second</span>
<div style="left:765px;top:452px;width:13px;height:13px;background:#fff;border:1px solid #8a8a8d;box-sizing:border-box"></div>
<span class="t" style="left:781.5px;top:455.1px;">Custom Class</span>
<svg style="left:867px;top:450px;" width="17" height="17" viewBox="0 0 17 17"><defs><radialGradient id="hg" cx="0.4" cy="0.3" r="0.8"><stop offset="0" stop-color="#5d8ff0"/><stop offset="1" stop-color="#1d4fc8"/></radialGradient></defs><circle cx="8.500" cy="8.500" r="8" fill="url(#hg)"/><text x="8.500" y="13" text-anchor="middle" font-family="Liberation Sans,sans-serif" font-weight="bold" font-size="12.500" fill="#fff">?</text></svg>
<span class="t" style="left:628.5px;top:483.1px;">sh Area:</span>
<div style="left:688px;top:476px;width:85px;height:20px;background:#fff;border:1px solid #dcdcdf;box-sizing:border-box"></div>
<span class="t" style="left:779px;top:483.1px;">Format: A1, C2:C12, E3:J6</span>
<div style="left:846px;top:532px;width:32px;height:20px;background:#fff;border:1px solid #dcdcdf;box-sizing:border-box"></div>
<span class="t" style="left:855.5px;top:538.6px;">OK</span>
<div style="left:855.5px;top:547px;width:6px;height:1px;background:#000;"></div>
<div style="left:888px;top:532px;width:56px;height:20px;background:#fff;border:1px solid #dcdcdf;box-sizing:border-box"></div>
<span class="t" style="left:898px;top:538.6px;">Cancel</span>
<div style="left:898px;top:547px;width:6px;height:1px;background:#000;"></div>
<div style="left:620px;top:372px;width:352px;height:202px;border:3.300px solid #f5403f;box-sizing:border-box;filter:drop-shadow(1px 2px 2.500px rgba(0,0,0,.45));"></div>
<div style="left:1229.8px;top:128px;width:92.2px;height:31.5px;border:3.300px solid #f5403f;box-sizing:border-box;filter:drop-shadow(1px 2px 2.500px rgba(0,0,0,.45));"></div>
<div style="left:1195.7px;top:256.5px;width:104.5px;height:33px;border:3.300px solid #f5403f;box-sizing:border-box;filter:drop-shadow(1px 2px 2.500px rgba(0,0,0,.45));"></div>
<div style="left:1194px;top:586px;width:300px;height:36.5px;border:3.300px solid #f5403f;box-sizing:border-box;filter:drop-shadow(1px 2px 2.500px rgba(0,0,0,.45));"></div>
<svg style="left:960px;top:465px;overflow:visible" width="240" height="140" viewBox="0 0 240 140"><g filter="drop-shadow(1px 2px 2px rgba(0,0,0,.3))"><path d="M229.700 131.200L25 17" stroke="#f5403f" stroke-width="6" stroke-linecap="round" fill="none"/><path d="M12 9.500L32 10.500L23.500 25Z" fill="#f5403f"/></g></svg>
</div></body></html>
